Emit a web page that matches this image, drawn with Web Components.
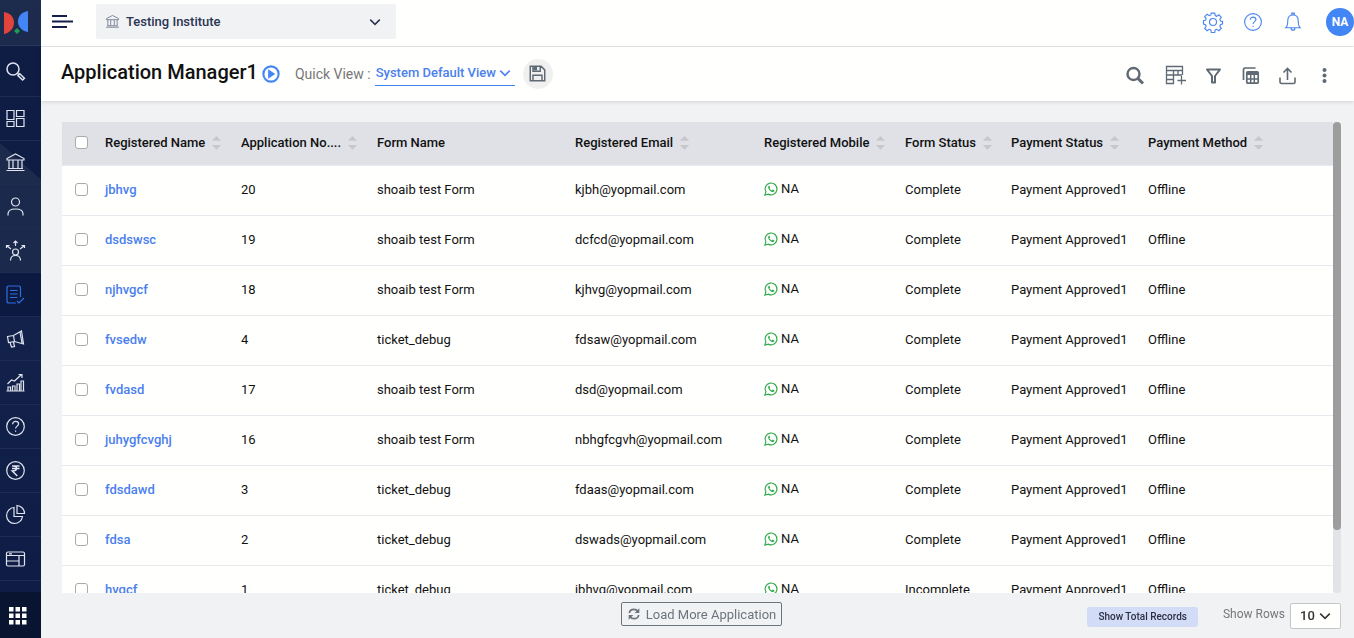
<!DOCTYPE html>
<html lang="en">
<head>
<meta charset="utf-8">
<meta name="viewport" content="width=device-width, initial-scale=1">
<title>Application Manager</title>
<style>
  html, body { margin: 0; height: 100%; }
  body { font-family: Roboto, "Liberation Sans", sans-serif; font-size: 13px; color: #111; background: #f1f2f4; overflow: hidden; }
</style>
</head>
<body>
<application-page></application-page>

<script>
const ICONS = {
  search: '<circle cx="8" cy="8" r="6" stroke-width="1.500"/><path d="M12 12l1.600 1.400M13 14.600l4.600 4.400 1.800-1.800-4.600-4.400z" stroke-width="1.500"/>',
  boxes: '<path d="M2 2.500h7v9H2zM11.500 2.500h7.500v6h-7.500zM2 13.500h7v5H2zM11.500 10.500h7.500v8h-7.500z"/>',
  bank: '<path d="M2 8V6.500L10.500 2 19 6.500V8zM1.500 18.500h18M3 16.500h15M4 8v8.500M8 8v8.500M13 8v8.500M17 8v8.500"/>',
  user: '<circle cx="10.500" cy="6" r="4"/><path d="M3 19.500v-1.500c0-3.500 2.500-5 7.500-5s7.500 1.500 7.500 5v1.500"/>',
  spread: '<circle cx="10.500" cy="12" r="3"/><path d="M5.500 20.500c0-3 2-5 5-5s5 2 5 5M10.500 6V1M8.500 3l2-2 2 2M6 9L1.500 5.500M1.500 8V5.500h3M15 9l4.500-3.500M19.500 8V5.500h-3"/>',
  form: '<path d="M15.500 13V4c0-1.500-.5-2-2-2H4C2.500 2 2 2.500 2 4v13c0 1.500.5 2 2 2h7M5 6.500h7.500M5 10h7.500M5 13.500h7.500M12 17l2 2 5-5"/>',
  horn: '<path d="M2.500 8.500l6-1 8-4.500 2 13-9-2.500-6 1zM8.500 7.500l1 6M5 14.500l1.500 4.500 3-.5-1-4.500M15 4l2 11"/>',
  chart: '<path d="M1.500 19h18M3 19v-4h2.500v4M7.500 19v-5h2.500v5M12 19v-7h2.500v7M16 19V9h2.500v10M2.500 12l4-4 3 1 7-6.500M13.500 2.500h3.500V6"/>',
  help: '<circle cx="10.500" cy="10.500" r="8.800"/><path d="M7.600 8.200c0-1.800 1.300-2.800 3-2.800s3 1.100 3 2.600c0 2-3 2.300-3 4.600M10.600 14.400v1.400"/>',
  rupee: '<circle cx="10.500" cy="10.500" r="8.800"/><path d="M7 6h7.500M7 8.500h7.500M7.500 6c5.500-.5 5.500 5 0 5h-.2l5 5" stroke-width="1.500"/>',
  pie: '<path d="M9 3.500a8 8 0 1 0 8.500 9H9zM12 1.500a8 8 0 0 1 7.500 8H12z"/>',
  window: '<path d="M3 4h15c1 0 1.500.5 1.500 1.500v11c0 .8-.5 1.500-1.500 1.500H3c-1 0-1.500-.7-1.500-1.500v-11C1.500 4.500 2 4 3 4zM1.500 7.500h18M14 7.500V18M1.500 13H14M4 5.800h3"/>',
  pin: '<path d="M10.500 1v4M5 5h11v14H5z"/>',
  apps: '<g fill="currentColor" stroke="none"><path d="M2 2h4.500v4.500H2zM8.500 2H13v4.500H8.500zM15 2h4.500v4.500H15zM2 8.500h4.500V13H2zM8.500 8.500H13V13H8.500zM15 8.500h4.500V13H15zM2 15h4.500v4.500H2zM8.500 15H13v4.500H8.500zM15 15h4.500v4.500H15z"/></g>',
  burger: '<path d="M0 5h15M0 10.500h21M0 16h15" stroke-width="2"/>',
  chevron: '<path d="M5.500 8l5 5 5-5" stroke-width="1.600"/>',
  play: '<circle cx="10.500" cy="10.500" r="8" stroke-width="2.200"/><path d="M7.500 5.500l7.500 5-7.500 5z" fill="currentColor" stroke="none"/>',
  floppy: '<path d="M2.500 2.500h12l4 4v12h-16zM5.500 18.500v-6h10v6M5.500 2.500v5.500h8V2.500" stroke-width="1.600"/><path d="M6 3h4v4H6z" fill="currentColor" stroke="none"/>',
  gear: '<circle cx="10.500" cy="10.500" r="3.700"/><path d="M8.700 1.200h3.600l.5 2.600 1.700.7 2.200-1.500 2.500 2.500-1.500 2.200.7 1.700 2.100.4v2.600l-2.100.9-.7 1.700 1.500 2.200-2.500 2.500-2.200-1.500-1.700.7-.5 2.600H8.700l-.5-2.600-1.700-.7-2.200 1.500-2.500-2.500 1.500-2.200-.7-1.700-2.100-.6V9.200l2.100-.5.700-1.700-1.500-2.200 2.500-2.500 2.200 1.500 1.700-.7z"/>',
  bell: '<path d="M3 16.500c2-1.500 2-3 2-7.500 0-3.500 2.200-6 5.500-6s5.500 2.500 5.500 6c0 4.500 0 6 2 7.500zM9.200 3V1.200h2.600V3M8.500 17c0 2.800 4 2.800 4 0"/>',
  find: '<circle cx="9.500" cy="9" r="6" stroke-width="2.400"/><path d="M14 13.500l5 5" stroke-width="3"/>',
  addcol: '<path d="M9 18.500H1.500v-17h16V10M1.500 5.500h16M8.500 5.500v13M1.500 10H17M1.500 14.500h7M13 5.500V10M16.500 11v8.500M12.500 15.500h8.500" stroke-width="1.300"/>',
  funnel: '<path d="M4 4.500h13l-5 6.500v6.500H9V11z" stroke-width="2" stroke-linejoin="round"/>',
  sheets: '<path d="M3.500 15V4.500c0-1 .5-1.500 1.500-1.500h10.500" stroke-width="1.700"/><rect x="6.800" y="6.800" width="11.400" height="11.400" rx="1" stroke-width="1.700"/><path d="M7 8.500h11" stroke-width="3"/><path d="M7 14h11M10.700 10v8M14.300 10v8" stroke-width="1.500"/>',
  upload: '<path d="M3 12.500v4.500c0 1 .5 1.500 1.500 1.500h12c1 0 1.500-.5 1.500-1.500v-4.500M10.500 15V4M6.500 7.500l4-4 4 4" stroke-width="1.600"/>',
  dots: '<g fill="currentColor" stroke="none"><circle cx="10.500" cy="5" r="2"/><circle cx="10.500" cy="10.500" r="2"/><circle cx="10.500" cy="16" r="2"/></g>',
  refresh: '<path d="M3.500 9c.5-3.500 3.500-5.500 7-5.500 2.500 0 4.500 1 6 3M17.500 12c-.5 3.500-3.500 5.500-7 5.500-2.500 0-4.500-1-6-3" stroke-width="2.600"/><path d="M18.500 2v7h-7zM2.500 19v-7h7z" fill="currentColor" stroke="none"/>',
  whatsapp: '<path d="M1.300 19.700l1.500-5a8.900 8.900 0 1 1 3.500 3.500z" stroke-width="1.800"/><path d="M7.300 5.600c-2.300 1.500-1 4.600 1.400 7 2.500 2.400 5.300 3.500 6.800 1.300l.1-1.300-2.500-1.400-1.400 1.500c-1.600-.6-2.800-1.900-3.500-3.300l1-1.300-1-2.500z" fill="currentColor" stroke="none"/>',
  sort: '<g fill="#c6c7c9" stroke="none"><path d="M4 8l6.500-6.500L17 8zM4 14l6.500 6.500L17 14z"/></g>'
};

/* Defines an element whose open shadow root is cloned from a template. */
function component(name, html, setup) {
  const template = document.createElement('template');
  template.innerHTML = html;
  customElements.define(name, class extends HTMLElement {
    constructor() {
      super();
      this.attachShadow({ mode: 'open' }).append(template.content.cloneNode(true));
    }
    connectedCallback() { if (setup) setup(this, this.shadowRoot); }
  });
}

component('line-icon', `
  <style>
    :host { display: block; flex: none; width: var(--size, 21px); height: var(--size, 21px); }
    svg { display: block; width: 100%; height: 100%; fill: none; stroke: currentColor; stroke-width: 1.2; overflow: visible; }
  </style>
  <svg viewBox="0 0 21 21" aria-hidden="true"></svg>`,
  (el, root) => { root.querySelector('svg').innerHTML = ICONS[el.getAttribute('name')]; });

component('icon-button', `
  <style>
    :host { display: block; }
    button { display: flex; align-items: center; justify-content: center; width: var(--hit, 21px); height: var(--hit, 21px);
      padding: 0; border: 0; border-radius: 50%; background: var(--fill, none); color: inherit; cursor: pointer; }
  </style>
  <button type="button"></button>`,
  (el, root) => {
    const button = root.querySelector('button');
    button.setAttribute('aria-label', el.getAttribute('label'));
    button.innerHTML = `<line-icon name="${el.getAttribute('icon')}"></line-icon>`;
  });

component('drop-down', `
  <style>
    :host { display: block; }
    .box { display: grid; align-items: center; height: 100%; }
    .box > * { grid-area: 1 / 1; }
    select { appearance: none; width: 100%; height: 100%; margin: 0; padding: var(--pad, 0); border: 0; border-radius: 0;
      background: none; color: inherit; font: inherit; cursor: pointer; }
    line-icon { justify-self: end; margin-right: var(--gap, 0); pointer-events: none; --size: 20px; }
    slot { display: block; justify-self: start; }
  </style>
  <div class="box">
    <slot></slot>
    <select></select>
    <line-icon name="chevron"></line-icon>
  </div>`,
  (el, root) => {
    const select = root.querySelector('select');
    select.setAttribute('aria-label', el.getAttribute('label'));
    select.replaceChildren(...el.getAttribute('options').split('|').map(text => new Option(text)));
  });

component('side-bar', `
  <style>
    :host { display: flex; flex-direction: column; width: 41px; flex: none; color: #dfe4ee;
      background: linear-gradient(#1d2b4d, #13224a 50%, #0e1c45); }
    .brand { display: block; height: 46px; flex: none; box-sizing: border-box; border-bottom: 1px solid #2b3a5c; }
    .brand svg { display: block; width: 30px; height: 46px; }
    nav { flex: 1; min-height: 0; overflow: hidden; }
    nav a { display: flex; align-items: center; height: 44px; box-sizing: border-box; padding-left: 5px;
      border-bottom: 1px solid #1e2c54; color: inherit; }
    nav a.search { height: 51px; background: #0f1d45; }
    nav a.boxes { background: #0f1d45; }
    nav a.bank { background: linear-gradient(222deg, #0f1d45 48%, #1c2a4c 49%); }
    nav a.user, nav a.spread { background: #1a294c; }
    nav a.form { background: #0c1941; color: #2f6fe0; }
    .apps { height: 46px; flex: none; display: flex; align-items: center; padding-left: 7px; background: #091431; color: #fff; }
  </style>
  <a class="brand" href="#" aria-label="Home"><svg viewBox="0 0 30 46">
    <path d="M4 12c6 1 10 5 10 10.500S10 33 4 34z" fill="#e0443a"/>
    <path d="M28 11c-6 1-10 5-10 10.500S22 31 28 32z" fill="#4385f5"/>
    <path d="M17 28l3 3-3 3-3-3z" fill="#1e9c55"/>
  </svg></a>
  <nav aria-label="Main"></nav>
  <icon-button class="apps" icon="apps" label="All apps"></icon-button>`,
  (el, root) => {
    const names = ['search', 'boxes', 'bank', 'user', 'spread', 'form', 'horn', 'chart', 'help', 'rupee', 'pie', 'window', 'pin'];
    root.querySelector('nav').innerHTML = names.map(name =>
      `<a class="${name}" href="#${name}" aria-label="${name}"><line-icon name="${name}"></line-icon></a>`).join('');
  });

component('top-bar', `
  <style>
    :host { display: flex; align-items: center; height: 47px; flex: none; box-sizing: border-box; padding: 0 0 3px 11px;
      background: #fffffd; border-bottom: 1px solid #e8e9eb; color: #4a86f2; }
    .menu { color: #14204a; }
    drop-down { width: 300px; height: 35px; margin-left: 23px; background: #f1f2f4; border-radius: 2px;
      color: #2b3553; font-weight: 500; font-size: 13px; --pad: 0 30px; --gap: 11px; }
    drop-down line-icon { --size: 15px; margin-left: 9px; color: #6f7890; }
    .tools { display: flex; align-items: center; gap: 19px; margin-left: auto; --hit: 21px; --size: 20px; }
    .avatar { width: 28px; height: 28px; margin-left: 4px; padding: 0; border: 0; border-radius: 50%; background: #4285f4; color: #fff;
      font: 700 12px Roboto, sans-serif; }
  </style>
  <icon-button class="menu" icon="burger" label="Menu"></icon-button>
  <drop-down label="Institute" options="Testing Institute"><line-icon name="bank"></line-icon></drop-down>
  <div class="tools">
    <icon-button icon="gear" label="Settings"></icon-button>
    <icon-button icon="help" label="Help"></icon-button>
    <icon-button icon="bell" label="Notifications"></icon-button>
    <button class="avatar" type="button">NA</button>
  </div>`);

component('tool-bar', `
  <style>
    :host { display: flex; align-items: center; height: 54px; flex: none; box-sizing: border-box; padding: 0 19px 1px 20px;
      background: #fffffd; box-shadow: 0 1px 4px #0002; color: #5f6973; z-index: 1; }
    h1 { margin: 0 3px 4px 0; font-size: 20px; font-weight: 500; line-height: 24px; color: #111; }
    .play { color: #4285f4; --size: 20px; }
    .caption { margin: 0 4px 0 13px; font-size: 14px; color: #777; }
    drop-down { width: 140px; height: 25px; box-sizing: border-box; border-bottom: 1px solid #4285f4; color: #4a80ee;
      font-size: 13px; font-weight: 500; --pad: 0 18px 2px 1px; }
    .save { margin-left: 8px; --hit: 30px; --fill: #f0f0f1; --size: 19px; }
    .tools { display: flex; align-items: center; gap: 16px; margin: 4px 0 0 auto; }
    .tools .wide { margin: 0 1px 0 4px; }
  </style>
  <h1>Application Manager1</h1>
  <icon-button class="play" icon="play" label="Watch tutorial"></icon-button>
  <span class="caption">Quick View :</span>
  <drop-down label="Quick View" options="System Default View"></drop-down>
  <icon-button class="save" icon="floppy" label="Save view"></icon-button>
  <div class="tools">
    <icon-button icon="find" label="Search"></icon-button>
    <icon-button class="wide" icon="addcol" label="Add column"></icon-button>
    <icon-button icon="funnel" label="Filter"></icon-button>
    <icon-button icon="sheets" label="Reports"></icon-button>
    <icon-button icon="upload" label="Export"></icon-button>
    <icon-button icon="dots" label="More"></icon-button>
  </div>`);

const COLUMNS = [
  ['Registered Name', 136, true], ['Application No....', 136, true], ['Form Name', 198, false],
  ['Registered Email', 189, true], ['Registered Mobile', 141, true], ['Form Status', 106, true],
  ['Payment Status', 137, true], ['Payment Method', 0, true]
];
const ROWS = [
  ['jbhvg', '20', 'shoaib test Form', 'kjbh@yopmail.com', 'Complete'],
  ['dsdswsc', '19', 'shoaib test Form', 'dcfcd@yopmail.com', 'Complete'],
  ['njhvgcf', '18', 'shoaib test Form', 'kjhvg@yopmail.com', 'Complete'],
  ['fvsedw', '4', 'ticket_debug', 'fdsaw@yopmail.com', 'Complete'],
  ['fvdasd', '17', 'shoaib test Form', 'dsd@yopmail.com', 'Complete'],
  ['juhygfcvghj', '16', 'shoaib test Form', 'nbhgfcgvh@yopmail.com', 'Complete'],
  ['fdsdawd', '3', 'ticket_debug', 'fdaas@yopmail.com', 'Complete'],
  ['fdsa', '2', 'ticket_debug', 'dswads@yopmail.com', 'Complete'],
  ['hvgcf', '1', 'ticket_debug', 'jbhvg@yopmail.com', 'Incomplete']
];

component('record-table', `
  <style>
    :host { display: flex; min-height: 0; }
    .scroll { flex: 1; min-width: 0; overflow: auto; scrollbar-width: none; background: #fffffd; }
    .room { padding-bottom: 50px; }
    table { width: 100%; min-width: 1240px; table-layout: fixed; border-collapse: separate; border-spacing: 0; }
    th, td { box-sizing: border-box; padding: 0 0 0 10px; text-align: left; white-space: nowrap; border-bottom: 1px solid #e8eaef; }
    th { position: sticky; top: 0; height: 44px; padding-bottom: 3px; background: #dfe1e7; font-weight: 500; }
    td { height: 50px; padding-bottom: 2px; }
    th:first-child, td:first-child { padding: 0 0 3px 13px; }
    .head { display: flex; align-items: center; gap: 4px; }
    .head icon-button { --size: 15px; --hit: 15px; }
    input { appearance: none; display: block; width: 13px; height: 13px; margin: 0; border: 1px solid #aaa; border-radius: 3px; background: #fff; }
    td a { color: #4a80ee; font-weight: 500; text-decoration: none; }
    .mobile { display: flex; align-items: center; gap: 3px; padding-bottom: 2px; }
    .mobile line-icon { --size: 14px; color: #35ad50; }
    .track { width: 8px; flex: none; border-radius: 4px; background: #e2e3e6; }
    .thumb { border-radius: 4px; background: #9d9d9e; }
  </style>
  <div class="scroll"><div class="room">
    <table>
      <colgroup></colgroup>
      <thead><tr></tr></thead>
      <tbody></tbody>
    </table>
  </div></div>
  <div class="track"><div class="thumb"></div></div>`,
  (el, root) => {
    const find = selector => root.querySelector(selector);
    find('colgroup').innerHTML = '<col style="width:33px">' +
      COLUMNS.map(([, width]) => width ? `<col style="width:${width}px">` : '<col>').join('');
    find('thead tr').innerHTML = '<th><input type="checkbox" aria-label="Select all"></th>' + COLUMNS.map(([title, , sortable]) =>
      `<th><div class="head"><span>${title}</span>${sortable ? `<icon-button icon="sort" label="Sort by ${title}"></icon-button>` : ''}</div></th>`).join('');
    find('tbody').innerHTML = ROWS.map(([name, number, form, email, status]) => `<tr>
      <td><input type="checkbox" aria-label="Select ${name}"></td>
      <td><a href="#${name}">${name}</a></td><td>${number}</td><td>${form}</td><td>${email}</td>
      <td><div class="mobile"><line-icon name="whatsapp"></line-icon><span>NA</span></div></td>
      <td>${status}</td><td>Payment Approved1</td><td>Offline</td></tr>`).join('');

    const scroll = find('.scroll'), thumb = find('.thumb');
    const update = () => {
      const ratio = scroll.clientHeight / scroll.scrollHeight;
      thumb.style.height = Math.round(scroll.clientHeight * ratio) + 'px';
      thumb.style.transform = `translateY(${Math.round(scroll.scrollTop * ratio)}px)`;
    };
    scroll.addEventListener('scroll', update);
    new ResizeObserver(update).observe(scroll);
  });

component('table-footer', `
  <style>
    :host { display: grid; grid-template-columns: 1fr auto 1fr; align-items: center; height: 45px; flex: none; color: #777; }
    button { font-family: inherit; cursor: pointer; }
    .more { grid-column: 2; display: flex; align-items: center; gap: 5px; height: 24px; margin-bottom: 3px; padding: 0 5px; border: 1px solid #6c757d;
      border-radius: 2px; background: none; color: #6c757d; font-size: 13px; --size: 14px; }
    .right { display: flex; align-items: center; justify-content: flex-end; }
    .total { height: 20px; margin-top: 2px; padding: 0 11px; border: 0; border-radius: 3px; background: #d3dcf7; color: #2b3040;
      font-size: 10px; font-weight: 500; }
    .rows { margin: 0 5px 3px 25px; font-size: 12px; }
    drop-down { width: 51px; height: 26px; box-sizing: border-box; border: 1px solid #c4c6ca; border-radius: 2px; background: #fffffd; color: #333;
      font-size: 13px; font-weight: 500; --pad: 0 20px 0 9px; --gap: 5px; }
  </style>
  <button class="more" type="button"><line-icon name="refresh"></line-icon>Load More Application</button>
  <div class="right">
    <button class="total" type="button">Show Total Records</button>
    <span class="rows">Show Rows</span>
    <drop-down label="Show Rows" options="10|20|50|100"></drop-down>
  </div>`);

component('application-page', `
  <style>
    :host { display: flex; height: 100vh; }
    .main { flex: 1; min-width: 0; display: flex; flex-direction: column; }
    .content { flex: 1; min-height: 0; display: flex; flex-direction: column; padding: 21px 13px 0 21px; }
    record-table { flex: 1; }
  </style>
  <side-bar></side-bar>
  <div class="main">
    <top-bar></top-bar>
    <tool-bar></tool-bar>
    <main class="content">
      <record-table></record-table>
      <table-footer></table-footer>
    </main>
  </div>`);
</script>
</body>
</html>
